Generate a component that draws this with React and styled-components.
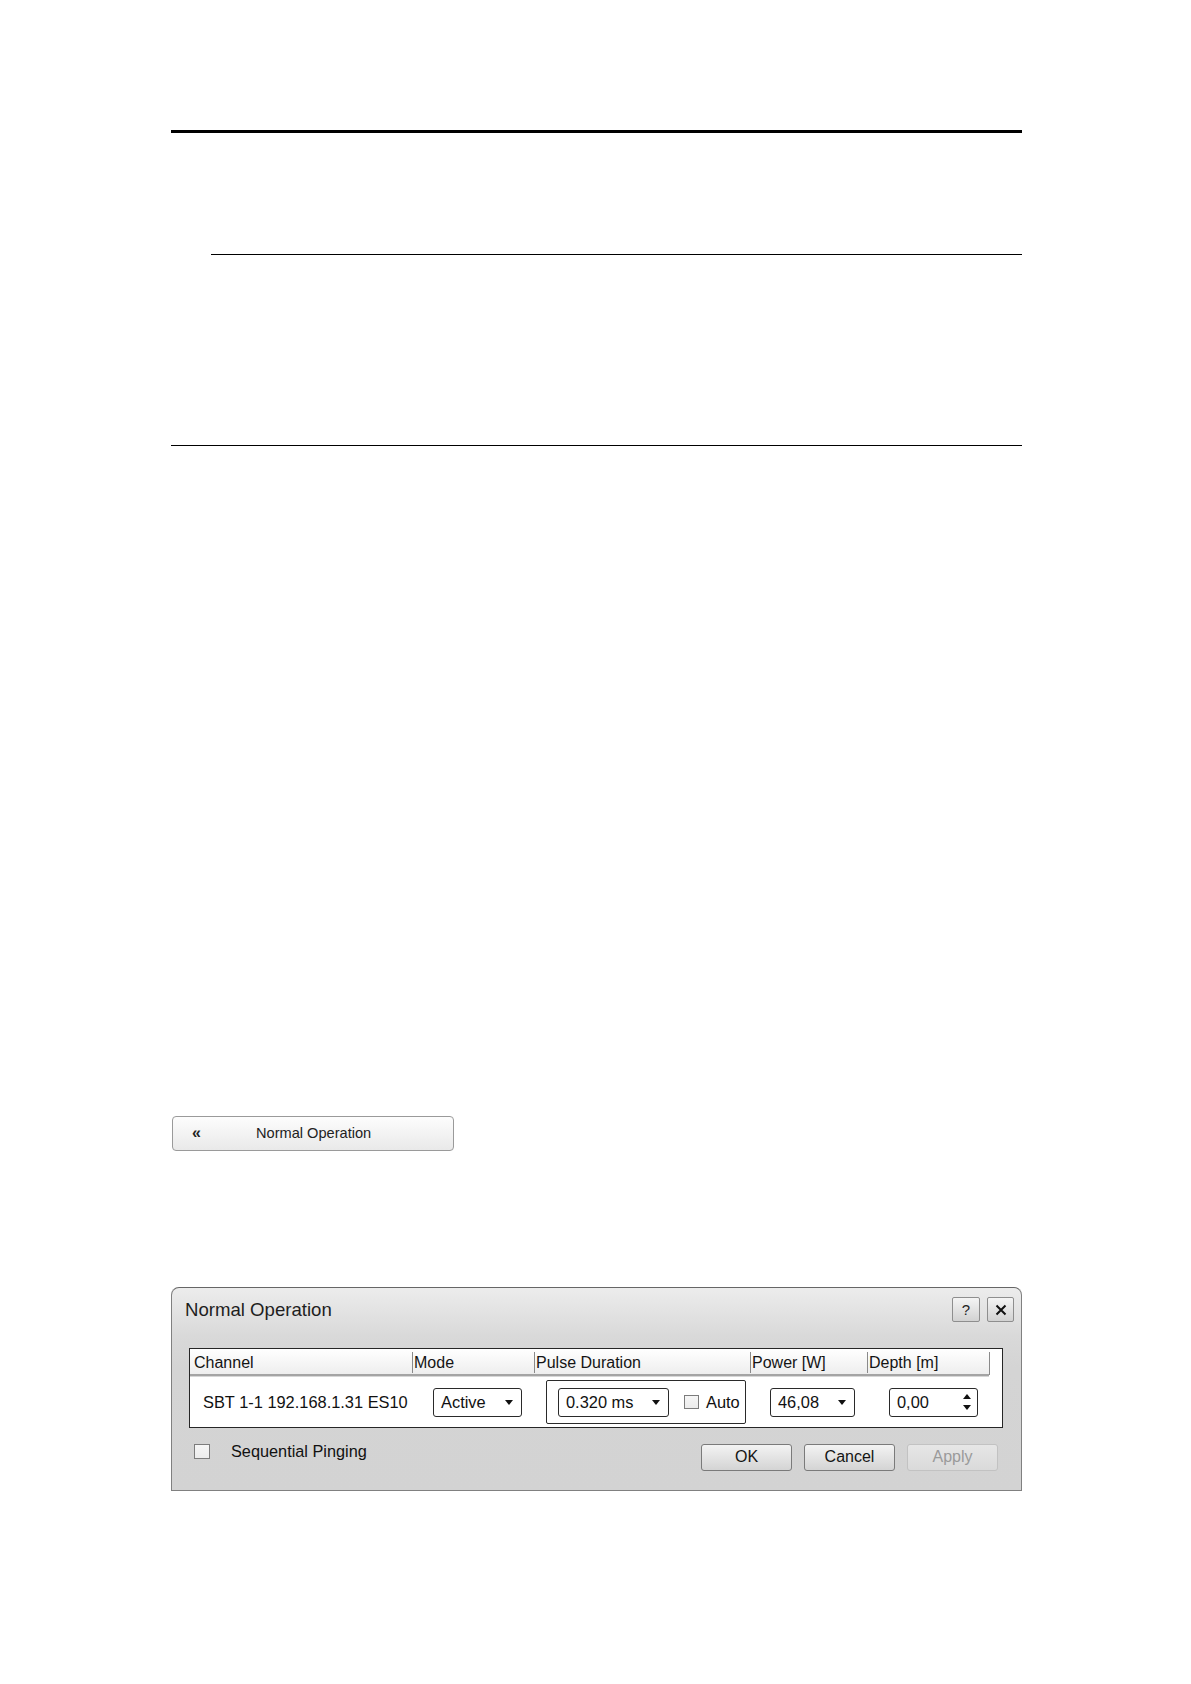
import React from 'react';
import styled, { createGlobalStyle } from 'styled-components';

const GlobalStyle = createGlobalStyle`
  html, body {
    margin: 0;
    padding: 0;
    background: #ffffff;
  }
  body {
    font-family: "Liberation Sans", Arial, sans-serif;
    color: #111;
  }
  * { box-sizing: border-box; }
`;

const Page = styled.div`
  width: 1191px;
  min-height: 1684px;
  padding-top: 130px;
  display: flex;
  flex-direction: column;
  align-items: flex-start;
`;

const Rule = styled.div`
  margin-top: ${({ gap }) => gap}px;
  margin-left: ${({ indent }) => indent}px;
  width: ${({ indent }) => 1022 - indent}px;
  height: ${({ thick }) => (thick ? 2.5 : 1)}px;
  background: #000;
`;

const NavButton = styled.div`
  margin-top: 670px;
  margin-left: 172px;
  width: 282px;
  height: 35px;
  display: flex;
  align-items: center;
  padding-left: 19px;
  border: 1px solid #9a9a9a;
  border-radius: 4px;
  background: linear-gradient(#fdfdfd, #e9e9e9);
  font-size: 14.6px;
  color: #222;
`;

const Chevrons = styled.span`
  font-size: 16px;
  font-weight: bold;
  width: 9px;
  margin-right: 55px;
  line-height: 1;
`;

const Dialog = styled.div`
  margin-top: 136px;
  margin-left: 171px;
  width: 851px;
  height: 204px;
  border: 1px solid #808080;
  border-top-color: #666;
  border-radius: 8px 8px 0 0;
  background: linear-gradient(#ececec 0px, #d9d9d9 48px, #d4d4d4 80px, #d3d3d3 100%);
  display: flex;
  flex-direction: column;
`;

const TitleBar = styled.div`
  height: 44px;
  display: flex;
  align-items: center;
  justify-content: space-between;
  padding: 0 7px 0 13px;
`;

const Title = styled.div`
  font-size: 18.6px;
  color: #1e1e1e;
`;

const TitleButtons = styled.div`
  display: flex;
  gap: 7px;
`;

const TitleButton = styled.div`
  width: ${({ w }) => w}px;
  height: 25px;
  border: 1px solid #8e8e8e;
  border-radius: 2px;
  background: linear-gradient(#f4f4f4, #d2d2d2);
  display: flex;
  align-items: center;
  justify-content: center;
  font-size: 15px;
  color: #222;
`;

const Table = styled.div`
  margin: 16px 18px 0 17px;
  border: 1px solid #262626;
  background: #fff;
`;

const cols = '222px 122px 216px 117px 122px 1fr';

const HeaderRow = styled.div`
  display: grid;
  grid-template-columns: ${cols};
  height: 29px;
`;

const HeaderCell = styled.div`
  position: relative;
  height: 27px;
  line-height: 27px;
  padding-left: ${({ first }) => (first ? 4 : 2)}px;
  font-size: 16px;
  color: #141414;
  white-space: nowrap;
  background: ${({ filler }) => (filler ? '#fff' : 'linear-gradient(#ffffff, #eeeeee)')};
  border-bottom: ${({ filler }) => (filler ? 'none' : '2px solid #a4a4a4')};
  box-shadow: ${({ filler }) => (filler ? 'none' : '0 1px 0 #d6d6d6')};

  &::before {
    content: '';
    display: ${({ first }) => (first ? 'none' : 'block')};
    position: absolute;
    left: 0;
    top: 3px;
    bottom: 1px;
    width: 1px;
    background: #8a8a8a;
  }
`;

const BodyRow = styled.div`
  display: grid;
  grid-template-columns: ${cols};
  height: 49px;
  align-items: center;
`;

const Cell = styled.div`
  display: flex;
  align-items: center;
  padding-left: ${({ inset }) => inset}px;
  font-size: 16.4px;
  color: #111;
  white-space: nowrap;
`;

const Select = styled.div`
  width: ${({ w }) => w}px;
  height: 29px;
  border: 1px solid #2a2a2a;
  border-radius: 3px;
  background: #fff;
  display: flex;
  align-items: center;
  justify-content: space-between;
  padding: 0 8px 0 7px;
  font-size: 16.4px;
  color: #111;
`;

const PulseGroup = styled.div`
  width: 200px;
  height: 44px;
  border: 1px solid #2a2a2a;
  border-radius: 2px;
  display: flex;
  align-items: center;
  padding-left: 11px;
`;

const AutoLabel = styled.label`
  display: flex;
  align-items: center;
  gap: 7px;
  margin-left: 15px;
  font-size: 16.4px;
`;

const Box = styled.span`
  display: inline-block;
  width: ${({ size }) => size}px;
  height: ${({ size }) => size - 1}px;
  border: 1px solid #7c7c7c;
  background: linear-gradient(#f6f6f6, #ececec);
`;

const Spinner = styled.div`
  display: flex;
  flex-direction: column;
  gap: 6px;
  margin-right: -2px;
`;

const Footer = styled.div`
  margin: 16px 18px 0 17px;
  padding: 0 5px;
  display: flex;
  justify-content: space-between;
  align-items: flex-start;
`;

const CheckRow = styled.label`
  display: flex;
  align-items: center;
  gap: 21px;
  height: 15px;
  font-size: 16.3px;
  color: #111;
`;

const Actions = styled.div`
  display: flex;
  gap: 12px;
`;

const ActionButton = styled.div`
  width: 91px;
  height: 27px;
  border: 1px solid ${({ disabled }) => (disabled ? '#c2c2c2' : '#7a7a7a')};
  border-radius: 3px;
  background: ${({ disabled }) =>
    disabled ? 'linear-gradient(#e6e6e6, #dadada)' : 'linear-gradient(#f3f3f3, #d4d4d4)'};
  color: ${({ disabled }) => (disabled ? '#9a9a9a' : '#151515')};
  display: flex;
  align-items: center;
  justify-content: center;
  font-size: 16px;
`;

const Arrow = () => (
  <svg width="8" height="5" viewBox="0 0 8 5">
    <path d="M0 0H8L4 5Z" fill="#111" />
  </svg>
);

const CloseIcon = () => (
  <svg width="12" height="12" viewBox="0 0 12 12">
    <path d="M1.5 1.5L10.5 10.5M10.5 1.5L1.5 10.5" stroke="#111" strokeWidth="2" />
  </svg>
);

const columns = ['Channel', 'Mode', 'Pulse Duration', 'Power [W]', 'Depth [m]'];

export default function App() {
  return (
    <Page>
      <GlobalStyle />
      <Rule thick gap={0} indent={171} />
      <Rule gap={121} indent={211} />
      <Rule gap={190} indent={171} />

      <NavButton>
        <Chevrons>«</Chevrons>
        Normal Operation
      </NavButton>

      <Dialog>
        <TitleBar>
          <Title>Normal Operation</Title>
          <TitleButtons>
            <TitleButton w={28}>?</TitleButton>
            <TitleButton w={27}><CloseIcon /></TitleButton>
          </TitleButtons>
        </TitleBar>

        <Table>
          <HeaderRow>
            {columns.map((c, i) => (
              <HeaderCell key={c} first={i === 0}>{c}</HeaderCell>
            ))}
            <HeaderCell filler />
          </HeaderRow>
          <BodyRow>
            <Cell inset={13}>SBT 1-1 192.168.1.31 ES10</Cell>
            <Cell inset={21}>
              <Select w={89}>Active<Arrow /></Select>
            </Cell>
            <Cell inset={12}>
              <PulseGroup>
                <Select w={111}>0.320 ms<Arrow /></Select>
                <AutoLabel><Box size={15} />Auto</AutoLabel>
              </PulseGroup>
            </Cell>
            <Cell inset={20}>
              <Select w={85}>46,08<Arrow /></Select>
            </Cell>
            <Cell inset={22}>
              <Select w={89}>
                0,00
                <Spinner>
                  <svg width="8" height="5" viewBox="0 0 8 5"><path d="M0 5H8L4 0Z" fill="#111" /></svg>
                  <svg width="8" height="5" viewBox="0 0 8 5"><path d="M0 0H8L4 5Z" fill="#111" /></svg>
                </Spinner>
              </Select>
            </Cell>
            <Cell />
          </BodyRow>
        </Table>

        <Footer>
          <CheckRow><Box size={16} />Sequential Pinging</CheckRow>
          <Actions>
            <ActionButton>OK</ActionButton>
            <ActionButton>Cancel</ActionButton>
            <ActionButton disabled>Apply</ActionButton>
          </Actions>
        </Footer>
      </Dialog>
    </Page>
  );
}
